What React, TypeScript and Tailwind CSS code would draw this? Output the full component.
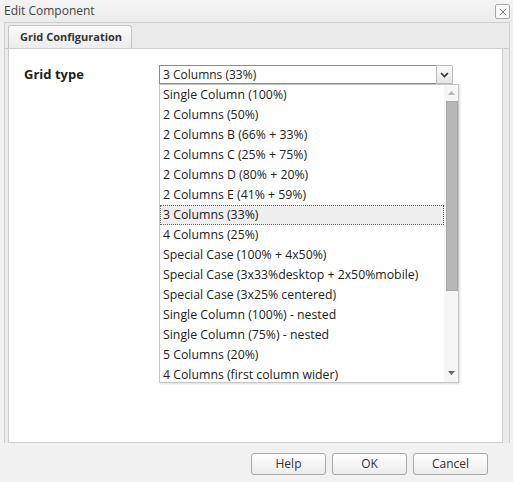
import { X } from 'lucide-react';

const options = [
  'Single Column (100%)',
  '2 Columns (50%)',
  '2 Columns B (66% + 33%)',
  '2 Columns C (25% + 75%)',
  '2 Columns D (80% + 20%)',
  '2 Columns E (41% + 59%)',
  '3 Columns (33%)',
  '4 Columns (25%)',
  'Special Case (100% + 4x50%)',
  'Special Case (3x33%desktop + 2x50%mobile)',
  'Special Case (3x25% centered)',
  'Single Column (100%) - nested',
  'Single Column (75%) - nested',
  '5 Columns (20%)',
  '4 Columns (first column wider)',
];

const selected = '3 Columns (33%)';

function DialogButton({ label }: { label: string }) {
  return (
    <button className="w-[75px] h-[22px] rounded-[3px] border border-[#a9a9a9] bg-gradient-to-b from-white to-[#ececec] text-[12px] text-[#333]">
      {label}
    </button>
  );
}

export default function App() {
  return (
    <div className="w-[513px] h-[482px] bg-[#f1f1f1] flex flex-col font-['Open_Sans',sans-serif] text-[#222] overflow-hidden">
      {/* Title bar */}
      <div className="h-[22px] flex items-center justify-between pl-[4px] pr-[3px] bg-gradient-to-b from-[#f4f4f4] to-[#ececec]">
        <span className="text-[12px] text-[#444]">Edit Component</span>
        <button className="w-[15px] h-[15px] mt-[1px] flex items-center justify-center border border-[#a8a8a8] rounded-[2px] bg-[#f8f8f8]">
          <X className="w-[12px] h-[12px] text-[#555]" strokeWidth={1.5} />
        </button>
      </div>

      {/* Tab panel */}
      <div className="ml-[4px] w-[506px] h-[421px] flex flex-col border-l border-r border-t border-[#d0d0d0] bg-[#ebebeb]">
        <div className="h-[26px] flex items-end pl-[3px] border-b border-[#cfcfcf]">
          <div className="h-[23px] w-[124px] flex items-center pl-[11px] border border-b-0 border-[#c4c4c4] rounded-t-[3px] bg-gradient-to-b from-[#fafafa] to-[#ececec]">
            <span className="text-[11px] font-bold text-[#333]">Grid Configuration</span>
          </div>
        </div>
        <div className="flex-1 flex pl-[3px] pr-[6px]">
          <div className="relative flex-1 bg-white border-l border-r border-b border-[#cdcdcd]">
            {/* Form row */}
            <div className="flex items-center mt-[16px] h-[19px]">
              <span className="ml-[15px] w-[135px] text-[13px] font-bold text-[#222]">Grid type</span>
              <div className="flex h-[19px]">
                <div className="w-[277px] h-[19px] border border-[#8d8d8d] border-r-0 flex items-center pl-[3px] text-[12px] text-[#222] leading-none">
                  {selected}
                </div>
                <div className="w-[17px] h-[19px] border border-[#b9b9b9] rounded-tr-[2px] bg-gradient-to-b from-[#fbfbfb] to-[#e6e6e6] flex items-center justify-center">
                  <svg width="9" height="6" viewBox="0 0 9 6">
                    <path d="M1 1 L4.5 4.5 L8 1" stroke="#333" strokeWidth="1.6" fill="none" />
                  </svg>
                </div>
              </div>
            </div>

            {/* Dropdown list */}
            <div className="absolute left-[150px] top-[35px] w-[300px] h-[299px] bg-white border border-[#c6c6c6] shadow-[1px_1px_2px_rgba(0,0,0,0.15)] flex overflow-hidden">
              <ul className="flex-1 flex flex-col">
                {options.map((o) => (
                  <li
                    key={o}
                    className={
                      o === selected
                        ? 'h-[20px] shrink-0 flex items-center pl-[2px] text-[12.3px] text-[#222] bg-[#eeeeee] border border-dotted border-[#666]'
                        : 'h-[20px] shrink-0 flex items-center pl-[2px] text-[12.3px] text-[#222] border border-transparent'
                    }
                  >
                    {o}
                  </li>
                ))}
              </ul>
              {/* Scrollbar */}
              <div className="w-[14px] flex flex-col items-center bg-[#f5f5f5]">
                <div className="h-[16px] w-full flex items-center justify-center">
                  <svg width="7" height="4" viewBox="0 0 7 4">
                    <path d="M0 4 L3.5 0 L7 4 Z" fill="#b4b4b4" />
                  </svg>
                </div>
                <div className="w-[12px] ml-[1px] h-[190px] bg-[#b7b7b7] border border-[#a9a9a9]" />
                <div className="flex-1" />
                <div className="h-[16px] w-full flex items-center justify-center mb-[1px]">
                  <svg width="7" height="4" viewBox="0 0 7 4">
                    <path d="M0 0 L7 0 L3.5 4 Z" fill="#666" />
                  </svg>
                </div>
              </div>
            </div>
          </div>
        </div>
      </div>

      {/* Footer */}
      <div className="flex-1 flex items-start justify-end gap-[6px] pt-[10px] pr-[25px]">
        <DialogButton label="Help" />
        <DialogButton label="OK" />
        <DialogButton label="Cancel" />
      </div>
    </div>
  );
}
